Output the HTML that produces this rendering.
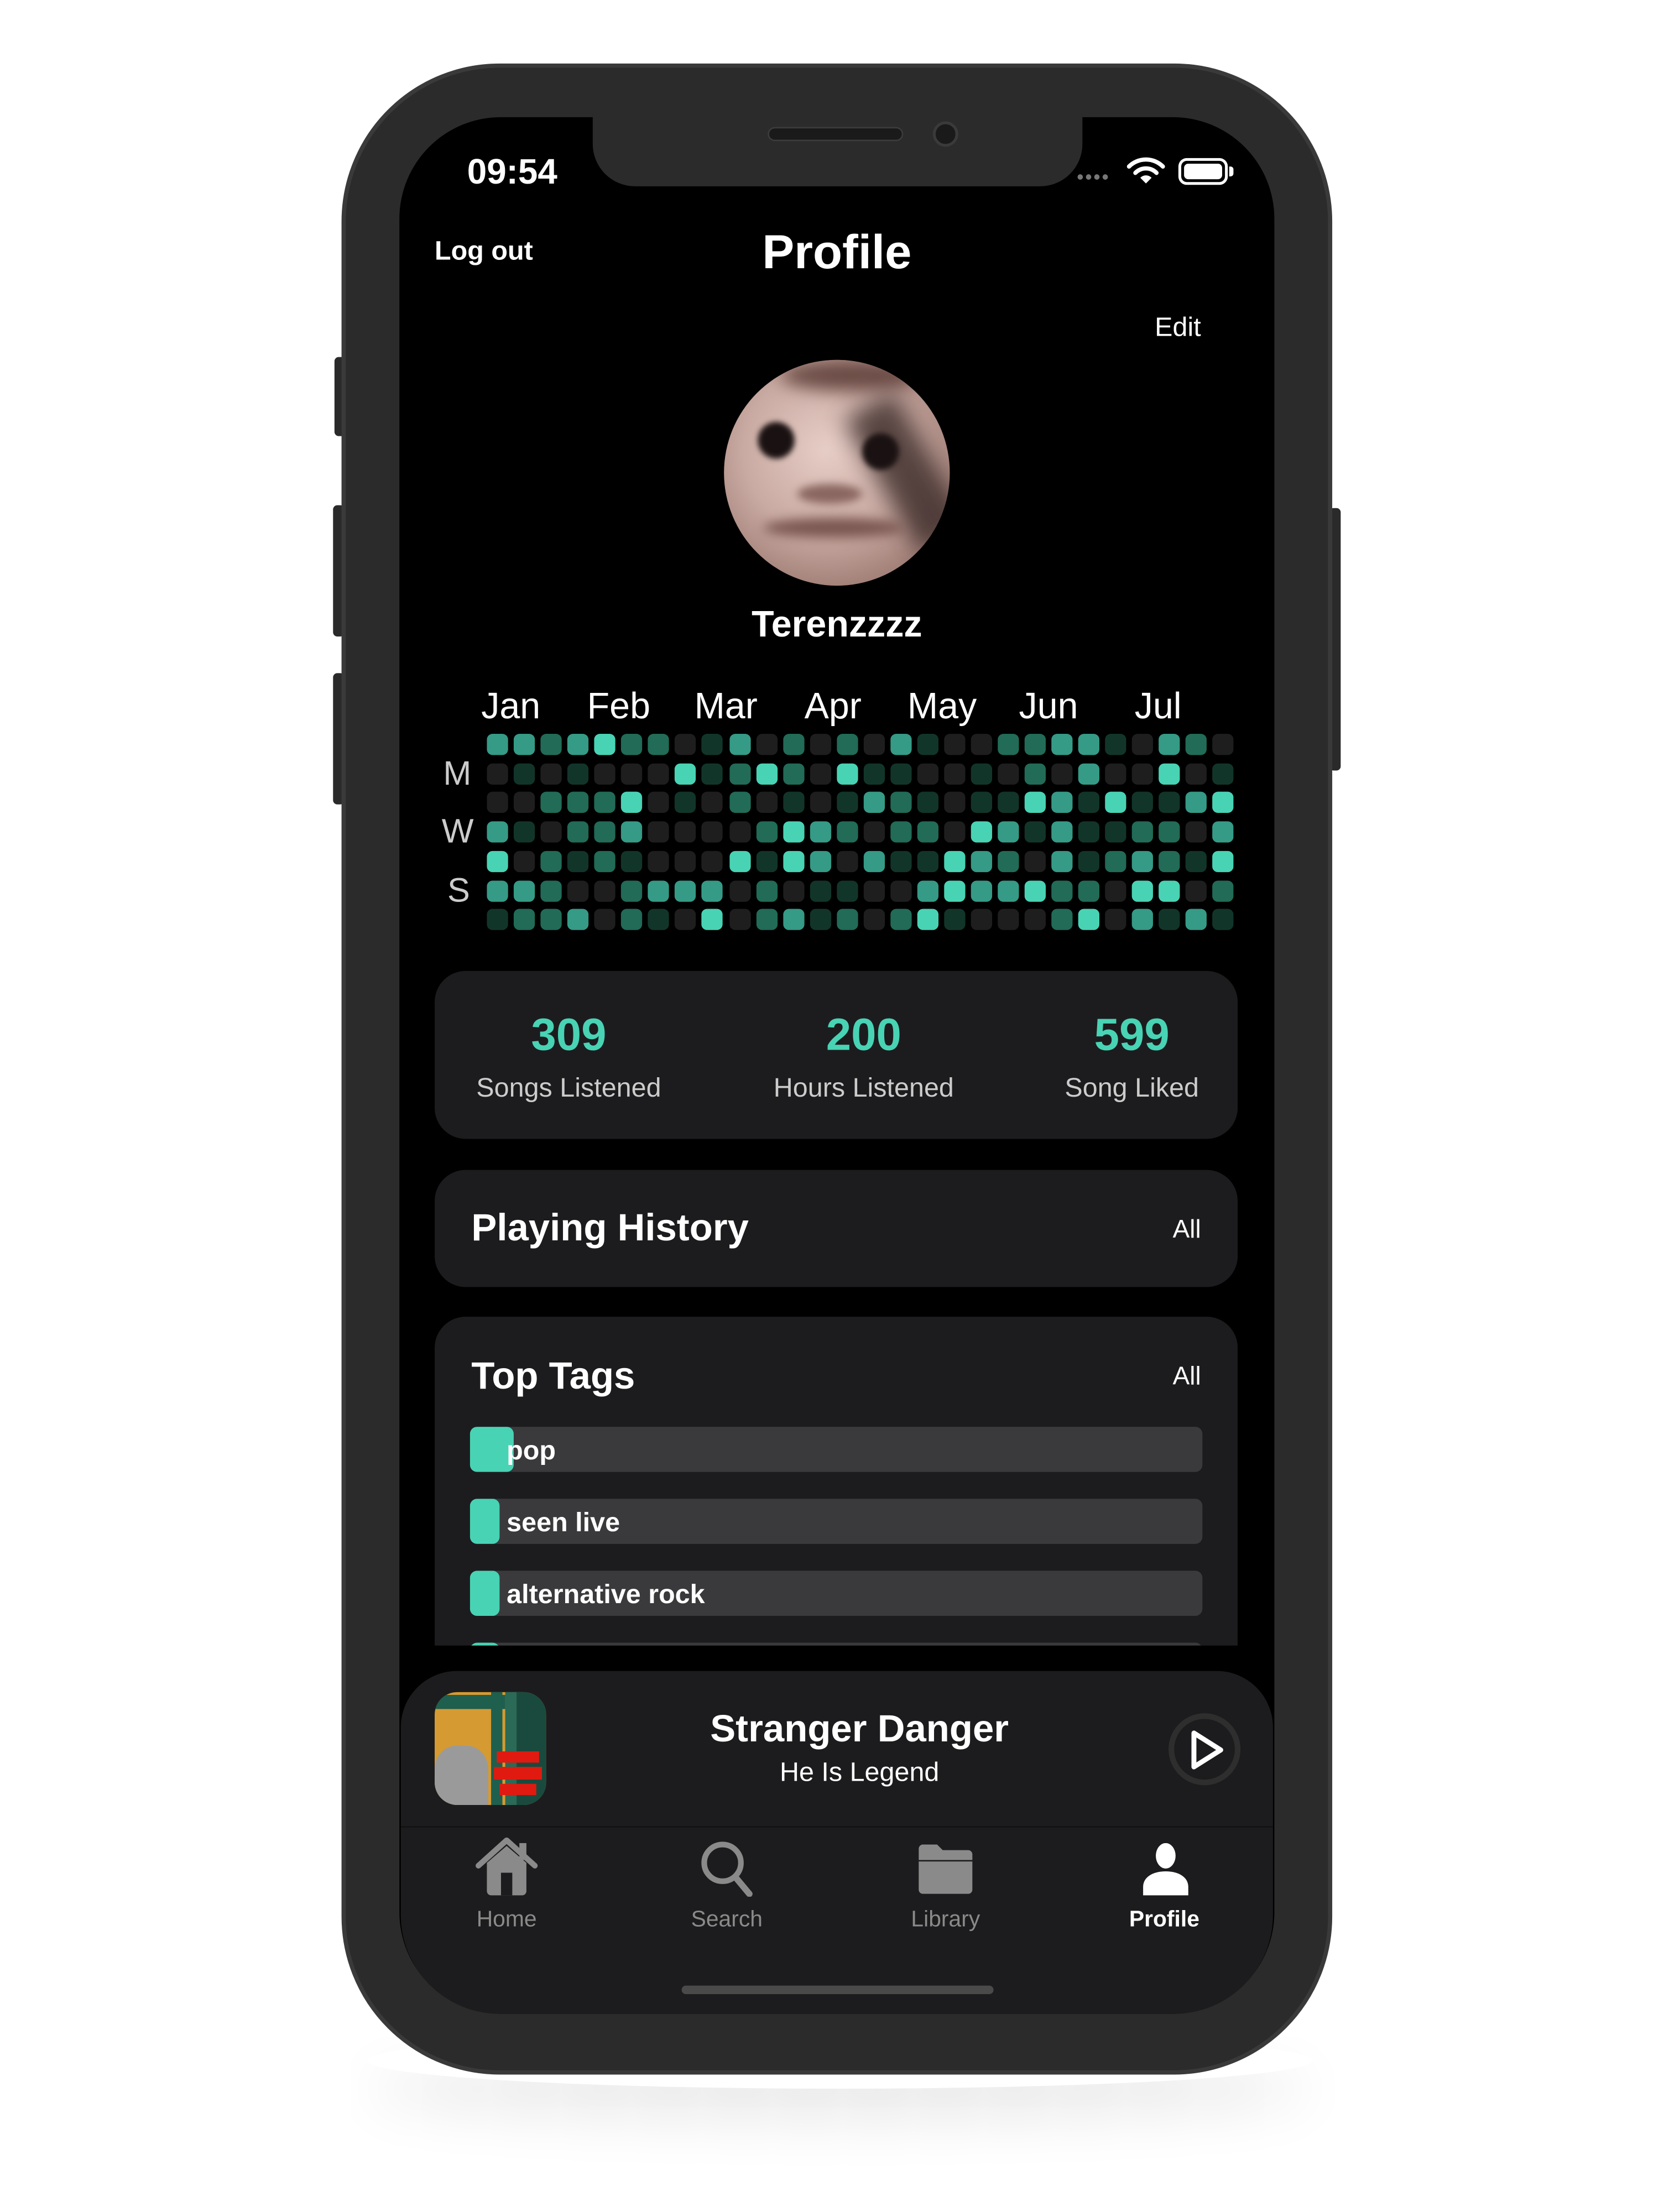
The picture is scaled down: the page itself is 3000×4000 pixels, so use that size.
<!DOCTYPE html>
<html><head><meta charset="utf-8">
<style>
*{margin:0;padding:0;box-sizing:border-box}
html,body{width:3000px;height:4000px;background:#fff;overflow:hidden}
#w{position:absolute;left:0;top:0;width:1172px;height:1563px;transform:scale(2.552);transform-origin:0 0;font-family:"Liberation Sans",sans-serif;color:#fff}
.a{position:absolute}
.t{position:absolute;white-space:nowrap;line-height:1}
.card{position:absolute;left:308px;width:569px;background:#1c1c1e;border-radius:22px}
.cell{position:absolute;width:15px;height:15px;border-radius:4px}
.bar{position:absolute;left:333px;width:519px;height:32px;background:#3a3a3c;border-radius:5px;overflow:hidden}
.bar i{position:absolute;left:0;top:0;bottom:0;background:#48d3b4;border-radius:5px}
.bar span{position:absolute;left:26px;top:7px;font-size:19px;font-weight:bold;color:#fff}
</style></head><body>
<div id="w">
<div class="a" style="left:260px;top:1440px;width:670px;height:40px;border-radius:50%;box-shadow:0 20px 40px rgba(0,0,0,.10)"></div>
<div class="a" style="left:237px;top:253px;width:8px;height:56px;background:#2a2a2a;border-radius:3px"></div>
<div class="a" style="left:236px;top:358px;width:8px;height:93px;background:#2a2a2a;border-radius:3px"></div>
<div class="a" style="left:236px;top:477px;width:8px;height:93px;background:#2a2a2a;border-radius:3px"></div>
<div class="a" style="left:942px;top:360px;width:8px;height:186px;background:#2a2a2a;border-radius:3px"></div>
<div class="a" style="left:242px;top:45px;width:702px;height:1425px;background:#2b2b2b;border-radius:112px;border:3px solid #3a3a3a"></div>
<div class="a" style="left:283px;top:83px;width:620px;height:1344px;background:#000;border-radius:72px;overflow:hidden"></div>
<div class="a" style="left:420px;top:80px;width:347px;height:52px;background:#2b2b2b;border-radius:0 0 30px 30px"></div>
<div class="a" style="left:544px;top:90px;width:96px;height:10px;background:#1a1a1a;border-radius:5px;border:1px solid #3c3c3c"></div>
<div class="a" style="left:661px;top:86px;width:18px;height:18px;background:#1a1a1a;border-radius:50%;border:2px solid #3a3a3a"></div>
<div class="t" style="left:331px;top:110px;font-size:25px;font-weight:bold">09:54</div>
<div class="t" style="left:763px;top:118px;font-size:14px;color:#777;letter-spacing:1px">••••</div>
<svg class="a" style="left:798px;top:110px" width="28" height="22" viewBox="0 0 28 22"><path d="M2 8a17 17 0 0 1 24 0" stroke="#fff" stroke-width="3" fill="none" stroke-linecap="round"/><path d="M6.5 12.5a10.5 10.5 0 0 1 15 0" stroke="#fff" stroke-width="3" fill="none" stroke-linecap="round"/><path d="M14 20l-4-4a5.5 5.5 0 0 1 8 0z" fill="#fff"/></svg>
<div class="a" style="left:835px;top:112px;width:35px;height:19px;border:2px solid #fff;border-radius:6px;padding:2px"><div style="width:100%;height:100%;background:#fff;border-radius:3px"></div></div>
<div class="a" style="left:871px;top:118px;width:3px;height:7px;background:#fff;border-radius:0 2px 2px 0"></div>
<div class="t" style="left:308px;top:169px;font-size:19px;font-weight:bold">Log out</div>
<div class="t" style="left:593px;top:162px;font-size:34px;font-weight:bold;transform:translateX(-50%)">Profile</div>
<div class="t" style="left:851px;top:223px;font-size:19px;transform:translateX(-100%)">Edit</div>
<div class="a" style="left:513px;top:255px;width:160px;height:160px;border-radius:50%;overflow:hidden;background:radial-gradient(circle at 45% 40%,#e6cdc6 0%,#c9aaa2 45%,#9c7a72 80%,#6e4e48 100%)">
 <div class="a" style="left:40px;top:0;width:100px;height:22px;background:#6a4a44;border-radius:50%;filter:blur(6px)"></div>
 <div class="a" style="left:110px;top:25px;width:40px;height:110px;background:#3a2a28;transform:rotate(-30deg);filter:blur(8px);opacity:.8"></div>
 <div class="a" style="left:24px;top:44px;width:26px;height:26px;background:#1a1212;border-radius:50%;filter:blur(2px)"></div>
 <div class="a" style="left:98px;top:52px;width:26px;height:26px;background:#1a1212;border-radius:50%;filter:blur(2px)"></div>
 <div class="a" style="left:52px;top:88px;width:46px;height:14px;background:#8a6660;border-radius:50%;filter:blur(3px)"></div>
 <div class="a" style="left:28px;top:112px;width:100px;height:14px;background:#7a5650;border-radius:50%;filter:blur(4px)"></div>
</div>
<div class="t" style="left:593px;top:429px;font-size:26px;font-weight:bold;transform:translateX(-50%)">Terenzzzz</div>
<div class="t" style="left:341px;top:487px;font-size:26px">Jan</div>
<div class="t" style="left:416px;top:487px;font-size:26px">Feb</div>
<div class="t" style="left:492px;top:487px;font-size:26px">Mar</div>
<div class="t" style="left:570px;top:487px;font-size:26px">Apr</div>
<div class="t" style="left:643px;top:487px;font-size:26px">May</div>
<div class="t" style="left:722px;top:487px;font-size:26px">Jun</div>
<div class="t" style="left:804px;top:487px;font-size:26px">Jul</div>
<div class="t" style="left:314px;top:537px;font-size:24px;color:#ccc">M</div>
<div class="t" style="left:313px;top:578px;font-size:24px;color:#ccc">W</div>
<div class="t" style="left:317px;top:620px;font-size:24px;color:#ccc">S</div>
<div id="grid"></div>
<div class="card" style="top:688px;height:119px"></div>
<div class="t" style="left:403px;top:717px;font-size:32px;font-weight:bold;color:#48d3b4;transform:translateX(-50%)">309</div>
<div class="t" style="left:612px;top:717px;font-size:32px;font-weight:bold;color:#48d3b4;transform:translateX(-50%)">200</div>
<div class="t" style="left:802px;top:717px;font-size:32px;font-weight:bold;color:#48d3b4;transform:translateX(-50%)">599</div>
<div class="t" style="left:403px;top:762px;font-size:19px;color:#ccc;transform:translateX(-50%)">Songs Listened</div>
<div class="t" style="left:612px;top:762px;font-size:19px;color:#ccc;transform:translateX(-50%)">Hours Listened</div>
<div class="t" style="left:802px;top:762px;font-size:19px;color:#ccc;transform:translateX(-50%)">Song Liked</div>
<div class="card" style="top:829px;height:83px"></div>
<div class="t" style="left:334px;top:857px;font-size:27px;font-weight:bold">Playing History</div>
<div class="t" style="left:851px;top:862px;font-size:18px;transform:translateX(-100%)">All</div>
<div class="a" style="left:308px;top:933px;width:569px;height:233px;overflow:hidden">
 <div class="a" style="left:0;top:0;width:569px;height:300px;background:#1c1c1e;border-radius:22px"></div>
</div>
<div class="t" style="left:334px;top:962px;font-size:27px;font-weight:bold">Top Tags</div>
<div class="t" style="left:851px;top:966px;font-size:18px;transform:translateX(-100%)">All</div>
<div class="bar" style="top:1011px"><i style="width:31px"></i><span>pop</span></div>
<div class="bar" style="top:1062px"><i style="width:21px"></i><span>seen live</span></div>
<div class="bar" style="top:1113px"><i style="width:21px"></i><span>alternative rock</span></div>
<div class="a" style="left:308px;top:1164px;width:569px;height:2px;overflow:hidden"><div class="bar" style="left:25px;top:0"><i style="width:21px"></i></div></div>
<div class="a" style="left:284px;top:1184px;width:618px;height:243px;background:#1c1c1e;border-radius:40px 40px 70px 70px"></div>
<div class="a" style="left:284px;top:1294px;width:618px;height:1px;background:#121212"></div>
<div class="a" style="left:308px;top:1199px;width:79px;height:80px;border-radius:16px;overflow:hidden;background:#d69a32">
 <div class="a" style="left:0;top:2px;width:50px;height:10px;background:#1f5f4e"></div>
 <div class="a" style="left:40px;top:0;width:8px;height:80px;background:#1f5f4e"></div>
 <div class="a" style="left:50px;top:0;width:8px;height:80px;background:#2a6a56"></div>
 <div class="a" style="left:58px;top:0;width:21px;height:80px;background:#1a4a3e"></div>
 <div class="a" style="left:0;top:38px;width:38px;height:42px;background:#9a9a9a;border-radius:40% 40% 0 0"></div>
 <div class="a" style="left:44px;top:42px;width:30px;height:8px;background:#e01a10"></div>
 <div class="a" style="left:42px;top:53px;width:34px;height:9px;background:#e01a10"></div>
 <div class="a" style="left:46px;top:65px;width:26px;height:8px;background:#e01a10"></div>
</div>
<div class="t" style="left:609px;top:1212px;font-size:27px;font-weight:bold;transform:translateX(-50%)">Stranger Danger</div>
<div class="t" style="left:609px;top:1247px;font-size:19px;transform:translateX(-50%)">He Is Legend</div>
<div class="a" style="left:828px;top:1214px;width:51px;height:51px;border-radius:50%;border:4px solid #2e2e2e"></div>
<svg class="a" style="left:842px;top:1225px" width="26" height="30" viewBox="0 0 26 30"><path d="M4 3L23 15L4 27Z" fill="none" stroke="#fff" stroke-width="3.5" stroke-linejoin="round"/></svg>
<svg class="a" style="left:337px;top:1302px" width="44" height="42" viewBox="0 0 44 42"><path d="M2 20L22 2L42 20" fill="none" stroke="#8a8a8a" stroke-width="4" stroke-linejoin="round" stroke-linecap="round"/><rect x="31" y="4" width="5" height="12" fill="#8a8a8a"/><path d="M8 18L22 6L36 18V38a3 3 0 0 1-3 3H11a3 3 0 0 1-3-3Z" fill="#8a8a8a"/><rect x="18" y="25" width="8" height="16" fill="#1c1c1e"/></svg>
<svg class="a" style="left:496px;top:1304px" width="40" height="40" viewBox="0 0 40 40"><circle cx="16" cy="16" r="13" fill="none" stroke="#8a8a8a" stroke-width="4"/><path d="M25 26L35 38" stroke="#8a8a8a" stroke-width="4.5" stroke-linecap="round"/></svg>
<svg class="a" style="left:648px;top:1306px" width="44" height="36" viewBox="0 0 44 36"><path d="M3 4a3 3 0 0 1 3-3h10l4 4h18a3 3 0 0 1 3 3v4H3Z" fill="#8a8a8a"/><path d="M3 13h38v20a3 3 0 0 1-3 3H6a3 3 0 0 1-3-3Z" fill="#8a8a8a"/></svg>
<svg class="a" style="left:808px;top:1306px" width="36" height="38" viewBox="0 0 36 38"><ellipse cx="18" cy="9" rx="7" ry="9" fill="#fff"/><path d="M2 37V31C2 24 9 20 18 20S34 24 34 31V37Z" fill="#fff"/></svg>
<div class="t" style="left:359px;top:1353px;font-size:16px;color:#8a8a8a;transform:translateX(-50%)">Home</div>
<div class="t" style="left:515px;top:1353px;font-size:16px;color:#8a8a8a;transform:translateX(-50%)">Search</div>
<div class="t" style="left:670px;top:1353px;font-size:16px;color:#8a8a8a;transform:translateX(-50%)">Library</div>
<div class="t" style="left:825px;top:1353px;font-size:16px;color:#fff;font-weight:bold;transform:translateX(-50%)">Profile</div>
<div class="a" style="left:483px;top:1407px;width:221px;height:6px;background:#4a4a4a;border-radius:3px"></div>
</div>
<script>
var rows=["3323422013020203100223310320","0101000412420411001020300401","0022240102010132101143141134","3102230000243202204313112203","4021210004143031143203123214","3320023330201100343342204402","1223021040231202410002403131"];
var col=["#1e1e1e","#12352a","#216b57","#359a86","#48d3b4"];
var g=document.getElementById('grid'),h='';
for(var r=0;r<7;r++)for(var c=0;c<28;c++){h+='<div class="cell" style="left:'+(345+c*19.05).toFixed(1)+'px;top:'+(520+r*20.7).toFixed(1)+'px;background:'+col[+rows[r][c]]+'"></div>';}
g.innerHTML=h;
</script>
</body></html>
